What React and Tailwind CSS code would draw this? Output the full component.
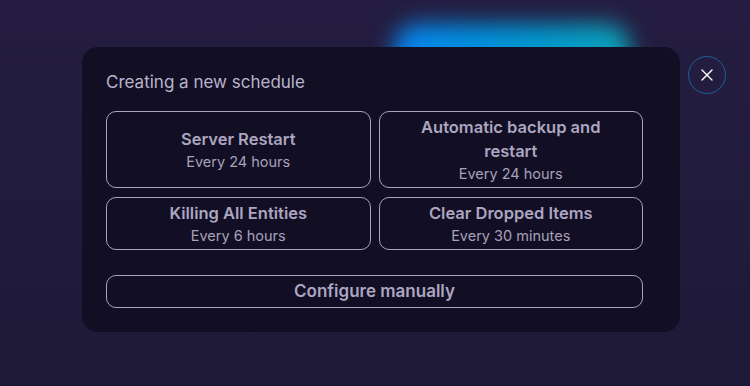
import { X } from 'lucide-react';

const presets = [
  { id: 'restart', title: 'Server Restart', every: 'Every 24 hours' },
  { id: 'backup', title: 'Automatic backup and restart', every: 'Every 24 hours' },
  { id: 'entities', title: 'Killing All Entities', every: 'Every 6 hours' },
  { id: 'items', title: 'Clear Dropped Items', every: 'Every 30 minutes' },
];

const App = () => {
  return (
    <div
      className="relative w-[750px] h-[386px] overflow-hidden bg-gradient-to-b from-[#241d41] to-[#1f1938] pt-[47px] pl-[82px]"
      style={{ fontFamily: 'Inter, "Noto Sans", sans-serif' }}
    >
      {/* glow behind the modal */}
      <div className="absolute left-[394px] top-[24px] w-[236px] h-[60px] rounded-[24px] bg-gradient-to-r from-[#0a84f2] to-[#0fa3b8] blur-[11px]"></div>

      <div className="relative flex items-start gap-[8px]">
        {/* Modal */}
        <div className="w-[598px] h-[285px] rounded-[16px] bg-[#120e24] pt-[23px] pl-[24px] pr-[37px]">
          <h2 className="text-[17px] leading-6 text-[#bab4cb]">Creating a new schedule</h2>

          <div className="mt-[17px] grid grid-cols-2 gap-x-[8px] gap-y-[9px]">
            {presets.map((p) => (
              <button
                key={p.id}
                className="flex flex-col items-center justify-center rounded-[10px] border border-[#a9a3be] px-7 py-[3px] text-center"
              >
                <span className="text-[16.5px] leading-6 font-semibold text-[#aca6c0]">{p.title}</span>
                <span className="text-[14.5px] leading-[21px] text-[#a7a1ba]">{p.every}</span>
              </button>
            ))}
          </div>

          <button className="mt-[25px] w-full h-[33px] rounded-[10px] border border-[#a9a3be] text-[17px] font-semibold text-[#aca6c0]">
            Configure manually
          </button>
        </div>

        {/* Close */}
        <button className="mt-[9px] w-[38px] h-[38px] rounded-full border border-[#1b5f96] flex items-center justify-center">
          <X className="w-[20px] h-[20px] text-white" strokeWidth={1.6} />
        </button>
      </div>
    </div>
  );
};

export default App;
